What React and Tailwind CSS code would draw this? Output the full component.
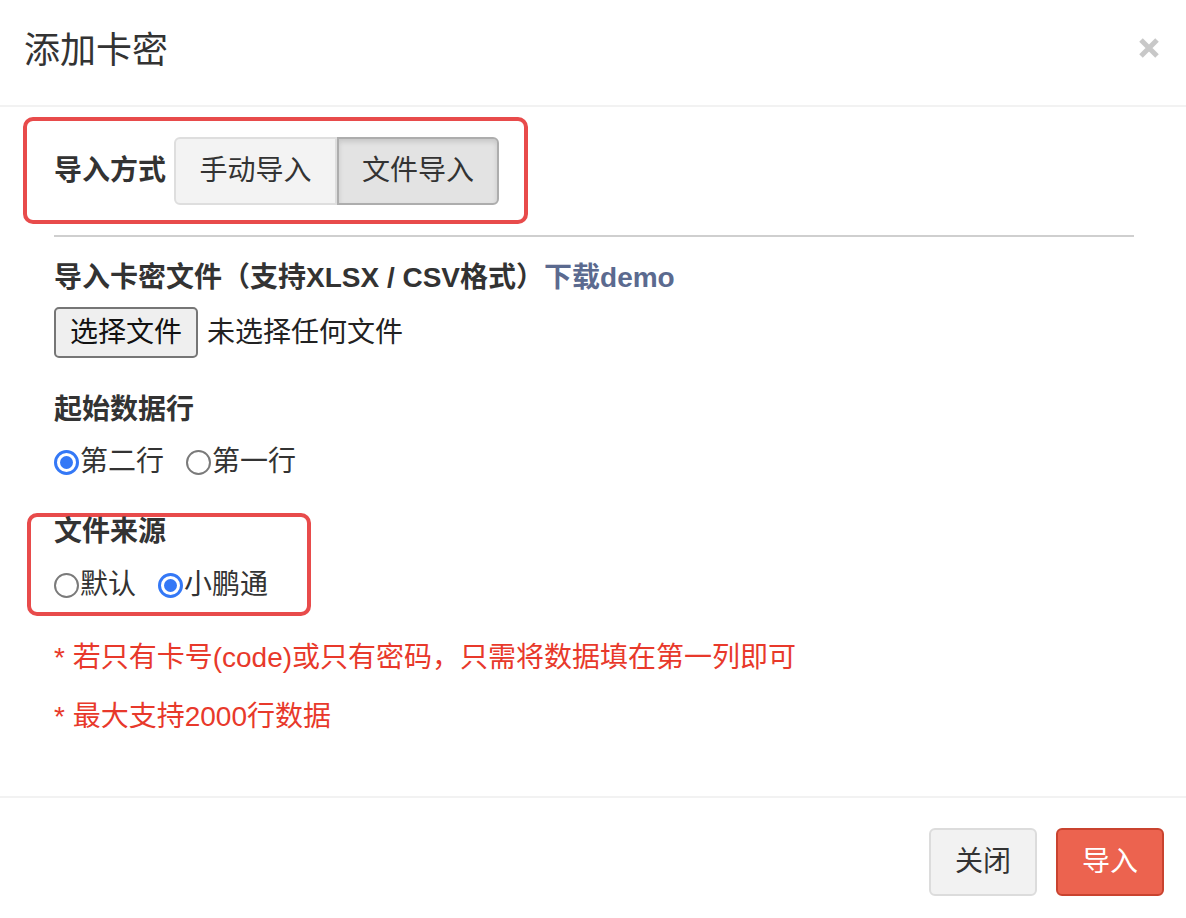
import React, { useState } from 'react';

const font = { fontFamily: '"Liberation Sans", "Noto Sans CJK SC", sans-serif' };

function Radio({ checked, label, onClick }) {
  return (
    <label className="flex items-center cursor-pointer" onClick={onClick}>
      {checked ? (
        <span className="w-[25px] h-[25px] rounded-full border-[3px] border-[#3478f6] flex items-center justify-center">
          <span className="w-[13px] h-[13px] rounded-full bg-[#3478f6]" />
        </span>
      ) : (
        <span className="w-[25px] h-[25px] rounded-full border-2 border-[#7a7a7a] bg-white" />
      )}
      <span className="ml-[1px]">{label}</span>
    </label>
  );
}

export default function App() {
  const [mode, setMode] = useState('file');
  const [startRow, setStartRow] = useState(2);
  const [source, setSource] = useState('xiaoe');

  return (
    <div className="w-[1186px] h-[918px] bg-white text-[#333] text-[28px] flex flex-col" style={font}>
      {/* Header */}
      <div className="h-[107px] flex items-center justify-between pl-6 pr-[26px] border-b-2 border-[#f2f2f2] shrink-0">
        <h3 className="text-[36px] leading-none text-[#333] -mt-[3px]">添加卡密</h3>
        <svg width="22" height="22" viewBox="0 0 22 22" className="-mt-[10px]">
          <path d="M3 3 L19 19 M19 3 L3 19" stroke="#c8c8c8" strokeWidth="5" />
        </svg>
      </div>

      {/* Body */}
      <div className="flex-1 pl-[54px] pr-[52px] pt-[10px]">
        <div className="-ml-[31px] w-[505px] h-[107px] border-4 border-[#e84b4b] rounded-[10px] pl-[27px] flex items-center">
          <span className="font-bold w-[120px]">导入方式</span>
          <div className="flex h-[68px]">
            <button
              onClick={() => setMode('manual')}
              className={`w-[163px] border-2 rounded-l-[6px] ${mode === 'manual' ? 'bg-[#e3e3e3] border-[#adadad] shadow-[inset_0_3px_5px_rgba(0,0,0,0.12)]' : 'bg-[#f3f3f3] border-[#dedede]'}`}
            >
              手动导入
            </button>
            <button
              onClick={() => setMode('file')}
              className={`w-[162px] border-2 rounded-r-[6px] ${mode === 'file' ? 'bg-[#e3e3e3] border-[#adadad] shadow-[inset_0_3px_5px_rgba(0,0,0,0.12)]' : 'bg-[#f3f3f3] border-[#dedede]'}`}
            >
              文件导入
            </button>
          </div>
        </div>

        <div className="mt-[11px] h-[2px] bg-[#cfcfcf]" />

        <div className="mt-[23px] leading-[36px] font-bold">
          导入卡密文件（支持XLSX / CSV格式）<a className="text-[#5b6a8f]">下载demo</a>
        </div>
        <div className="mt-[11px] flex items-center">
          <button className="w-[144px] h-[51px] bg-[#efefef] border-2 border-[#767676] rounded-[5px] text-[#111]">选择文件</button>
          <span className="ml-[9px] text-[#222]">未选择任何文件</span>
        </div>

        <div className="mt-[34px] leading-[36px] font-bold">起始数据行</div>
        <div className="mt-[16px] h-[36px] flex items-center gap-[22px]">
          <Radio checked={startRow === 2} label="第二行" onClick={() => setStartRow(2)} />
          <Radio checked={startRow === 1} label="第一行" onClick={() => setStartRow(1)} />
        </div>

        <div className="mt-[33px] -ml-[27px] w-[284px] h-[103px] border-4 border-[#e84b4b] rounded-[10px] pl-[23px] flex flex-col">
          <div className="leading-[30px] font-bold">文件来源</div>
          <div className="mt-[20px] h-[36px] flex items-center gap-[22px]">
            <Radio checked={source === 'default'} label="默认" onClick={() => setSource('default')} />
            <Radio checked={source === 'xiaoe'} label="小鹏通" onClick={() => setSource('xiaoe')} />
          </div>
        </div>

        <p className="mt-[24px] leading-[36px] text-[#e8392b]">* 若只有卡号(code)或只有密码，只需将数据填在第一列即可</p>
        <p className="mt-[23px] leading-[36px] text-[#e8392b]">* 最大支持2000行数据</p>
      </div>

      {/* Footer */}
      <div className="h-[122px] border-t-2 border-[#f2f2f2] flex justify-end items-start pt-[30px] pr-[22px] gap-[19px] shrink-0">
        <button className="w-[108px] h-[68px] bg-[#f2f2f2] border-2 border-[#dcdcdc] rounded-[6px] text-[#333]">关闭</button>
        <button className="w-[108px] h-[68px] bg-[#ec634f] border-2 border-[#c9432f] rounded-[6px] text-white">导入</button>
      </div>
    </div>
  );
}
